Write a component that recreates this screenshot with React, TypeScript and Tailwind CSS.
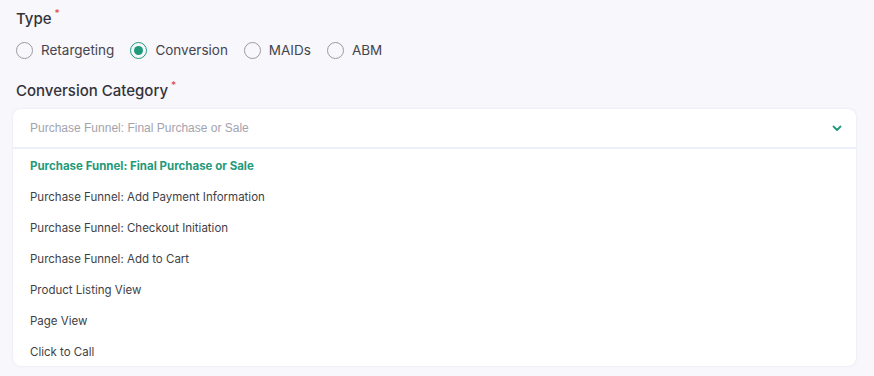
import { useState } from 'react';

const types = ['Retargeting', 'Conversion', 'MAIDs', 'ABM'];

const categories = [
  'Purchase Funnel: Final Purchase or Sale',
  'Purchase Funnel: Add Payment Information',
  'Purchase Funnel: Checkout Initiation',
  'Purchase Funnel: Add to Cart',
  'Product Listing View',
  'Page View',
  'Click to Call',
];

const Radio = ({ label, checked, onClick }: { label: string; checked: boolean; onClick: () => void }) => (
  <button onClick={onClick} className="flex items-center gap-[8px] h-[20px]">
    <span
      className={`w-[17px] h-[17px] rounded-full border-[1.5px] flex items-center justify-center ${
        checked ? 'border-[#1f9a7b]' : 'border-[#9a9aa2]'
      }`}
    >
      {checked && <span className="w-[9px] h-[9px] rounded-full bg-[#1f9a7b]" />}
    </span>
    <span className="text-[13.5px] text-[#45454d]">{label}</span>
  </button>
);

export default function App() {
  const [type, setType] = useState('Conversion');
  const [selected, setSelected] = useState(categories[0]);

  return (
    <div className="w-[874px] h-[376px] bg-[#f7f7fc] overflow-hidden pt-[8px]" style={{ fontFamily: 'Inter, sans-serif' }}>
      <div className="px-[16px]">
        <div className="text-[15px] text-[#33333a] font-medium h-[20px] flex items-start">
          Type<span className="text-[#e5484d] text-[10px] ml-[3px] leading-none">*</span>
        </div>
        <div className="flex items-center gap-[16px] mt-[12px]">
          {types.map((t) => (
            <Radio key={t} label={t} checked={type === t} onClick={() => setType(t)} />
          ))}
        </div>
        <div className="text-[15px] text-[#33333a] font-medium h-[20px] flex items-start mt-[20px]">
          Conversion Category<span className="text-[#e5484d] text-[10px] ml-[3px] leading-none">*</span>
        </div>
      </div>
      <div className="mx-[13px] w-[843px] mt-[9px] bg-white rounded-[8px] shadow-[0_0_2px_rgba(200,200,230,0.5)]">
        <div className="h-[40px] flex items-center justify-between pl-[17px] pr-[14px] border-b-[2px] border-[#eceef9]">
          <span className="text-[12px] text-[#a3a3ad]" style={{ fontFamily: '"Liberation Sans", Arial, sans-serif' }}>
            {selected}
          </span>
          <svg width="10" height="7" viewBox="0 0 10 7" fill="none">
            <path d="M1.5 1.5 L5 5 L8.5 1.5" stroke="#1f9a7b" strokeWidth="1.8" strokeLinecap="round" strokeLinejoin="round" />
          </svg>
        </div>
        <div>
          {categories.map((c) => (
            <div
              key={c}
              onClick={() => setSelected(c)}
              className={`h-[31px] flex items-center pl-[17px] pt-[4px] text-[11.5px] cursor-pointer ${
                selected === c ? 'text-[#1f9a7b] font-bold' : 'text-[#3f3f46]'
              }`}
            >
              {c}
            </div>
          ))}
        </div>
      </div>
    </div>
  );
}
